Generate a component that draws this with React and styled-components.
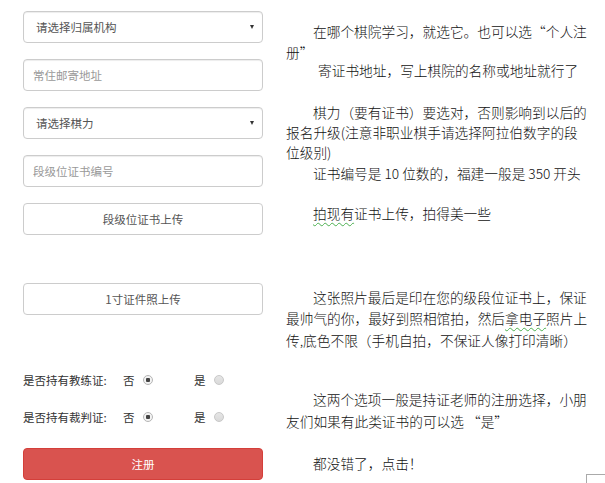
import React from "react";
import styled, { createGlobalStyle } from "styled-components";

const Global = createGlobalStyle`
  html, body { margin: 0; padding: 0; background: #fff; }
  body { width: 605px; height: 483px; overflow: hidden; }
  #root { position: relative; width: 605px; height: 483px; }
`;

const Page = styled.div`
  display: flex;
  align-items: flex-start;
  width: 605px;
  height: 483px;
`;

const Form = styled.div`
  display: flex;
  flex-direction: column;
  width: 240px;
  margin-left: 23px;
  padding-top: 11px;
  font-family: "Noto Sans CJK SC", "Noto Sans", sans-serif;
  font-size: 11.5px;
`;

const Control = styled.div`
  box-sizing: border-box;
  height: 32px;
  margin-top: ${(p) => p.$gap || 0}px;
  border: 1px solid #ccc;
  border-radius: 4px;
  background: #fff;
  box-shadow: inset 0 1px 1px rgba(0, 0, 0, 0.075);
  display: flex;
  align-items: center;
  padding: 0 ${(p) => (p.$select ? 8 : 0)}px 0 ${(p) => (p.$select ? 12 : 9)}px;
  color: ${(p) => (p.$placeholder ? "#999" : "#555")};
`;

const Arrow = styled.span`
  margin-left: auto;
  width: 0;
  height: 0;
  border-left: 2.5px solid transparent;
  border-right: 2.5px solid transparent;
  border-top: 4px solid #333;
`;

const Upload = styled.div`
  box-sizing: border-box;
  height: 32px;
  margin-top: ${(p) => p.$gap || 0}px;
  border: 1px solid #ccc;
  border-radius: 4px;
  background: #fff;
  display: flex;
  align-items: center;
  justify-content: center;
  color: #555;
`;

const RadioRow = styled.div`
  margin-top: ${(p) => p.$gap || 0}px;
  height: 20px;
  display: grid;
  grid-template-columns: 100px 71px auto;
  align-items: center;
  color: #333;
`;

const Option = styled.div`
  display: flex;
  align-items: center;
  gap: 8px;
`;

const Radio = styled.span`
  box-sizing: border-box;
  width: 10px;
  height: 10px;
  border-radius: 50%;
  border: 1px solid ${(p) => (p.$on ? "#b5b5b5" : "#c8c8c8")};
  background: ${(p) =>
    p.$on
      ? "radial-gradient(circle, #444 0 2px, #f3f3f3 2.5px)"
      : "linear-gradient(#e6e6e6, #d9d9d9)"};
`;

const Register = styled.div`
  box-sizing: border-box;
  height: 32px;
  margin-top: ${(p) => p.$gap || 0}px;
  border: 1px solid #d43f3a;
  border-radius: 4px;
  background: #d9534f;
  color: #fff;
  display: flex;
  align-items: center;
  justify-content: center;
`;

const Notes = styled.div`
  margin-left: 23px;
  padding-top: 22px;
  font-family: "Noto Sans CJK SC", "Noto Sans", sans-serif;
  font-size: 13.7px;
  font-weight: 300;
  color: #111;
`;

const Line = styled.div`
  height: 18px;
  line-height: 18px;
  white-space: nowrap;
  margin-top: ${(p) => p.$gap || 0}px;
  padding-left: ${(p) => p.$indent || 0}px;
`;

const Squiggle = styled.span`
  text-decoration: underline wavy #4caf50;
  text-decoration-thickness: 1px;
  text-underline-offset: 3px;
`;

const Corner = styled.div`
  position: absolute;
  left: 586px;
  top: 474px;
  width: 19px;
  height: 9px;
  border-top: 1px solid #aaa;
  border-left: 1px solid #aaa;
`;

export default function App() {
  return (
    <>
      <Global />
      <Page>
        <Form>
          <Control $select>
            请选择归属机构
            <Arrow />
          </Control>
          <Control $gap={16} $placeholder>
            常住邮寄地址
          </Control>
          <Control $gap={16} $select>
            请选择棋力
            <Arrow />
          </Control>
          <Control $gap={16} $placeholder>
            段级位证书编号
          </Control>
          <Upload $gap={16}>段级位证书上传</Upload>
          <Upload $gap={48}>1寸证件照上传</Upload>
          <RadioRow $gap={55}>
            <span>是否持有教练证:</span>
            <Option>
              否 <Radio $on />
            </Option>
            <Option>
              是 <Radio />
            </Option>
          </RadioRow>
          <RadioRow $gap={17}>
            <span>是否持有裁判证:</span>
            <Option>
              否 <Radio $on />
            </Option>
            <Option>
              是 <Radio />
            </Option>
          </RadioRow>
          <Register $gap={21}>注册</Register>
        </Form>
        <Notes>
          <Line $indent={27}>在哪个棋院学习，就选它。也可以选“个人注</Line>
          <Line $gap={3}>册”</Line>
          <Line $indent={32}>寄证书地址，写上棋院的名称或地址就行了</Line>
          <Line $gap={24} $indent={27}>棋力（要有证书）要选对，否则影响到以后的</Line>
          <Line $gap={2}>报名升级(注意非职业棋手请选择阿拉伯数字的段</Line>
          <Line $gap={2}>位级别)</Line>
          <Line $gap={3} $indent={27}>证书编号是 10 位数的，福建一般是 350 开头</Line>
          <Line $gap={22} $indent={27}>
            <Squiggle>拍现有</Squiggle>证书上传，拍得美一些
          </Line>
          <Line $gap={66} $indent={27}>这张照片最后是印在您的级段位证书上，保证</Line>
          <Line $gap={3}>
            最帅气的你，最好到照相馆拍，然后<Squiggle>拿电子</Squiggle>照片上
          </Line>
          <Line $gap={4}>传,底色不限（手机自拍，不保证人像打印清晰）</Line>
          <Line $gap={41} $indent={27}>这两个选项一般是持证老师的注册选择，小朋</Line>
          <Line $gap={4}>友们如果有此类证书的可以选 “是”</Line>
          <Line $gap={24} $indent={27}>都没错了，点击！</Line>
        </Notes>
      </Page>
      <Corner />
    </>
  );
}
